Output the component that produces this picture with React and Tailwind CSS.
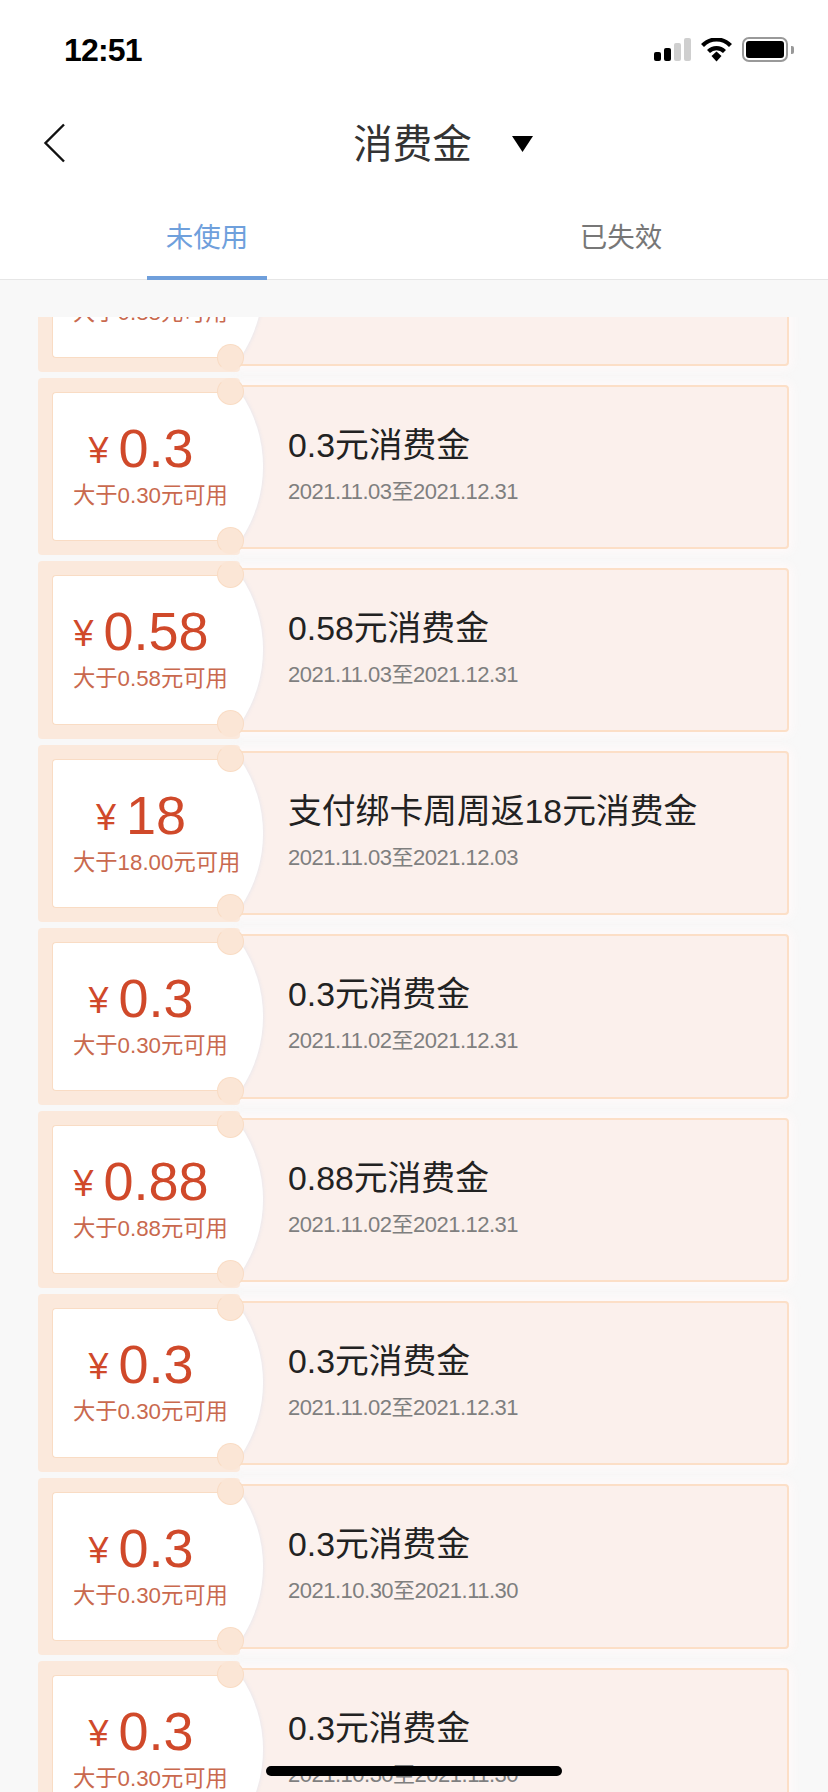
const SANS = "font-['Liberation_Sans','Noto_Sans_CJK_SC',sans-serif]";

const coupons = [
	{ amount: '0.88', min: '0.88', title: '0.88元消费金', date: '2021.11.03至2021.12.31' },
	{ amount: '0.3', min: '0.30', title: '0.3元消费金', date: '2021.11.03至2021.12.31' },
	{ amount: '0.58', min: '0.58', title: '0.58元消费金', date: '2021.11.03至2021.12.31' },
	{ amount: '18', min: '18.00', title: '支付绑卡周周返18元消费金', date: '2021.11.03至2021.12.03' },
	{ amount: '0.3', min: '0.30', title: '0.3元消费金', date: '2021.11.02至2021.12.31' },
	{ amount: '0.88', min: '0.88', title: '0.88元消费金', date: '2021.11.02至2021.12.31' },
	{ amount: '0.3', min: '0.30', title: '0.3元消费金', date: '2021.11.02至2021.12.31' },
	{ amount: '0.3', min: '0.30', title: '0.3元消费金', date: '2021.10.30至2021.11.30' },
	{ amount: '0.3', min: '0.30', title: '0.3元消费金', date: '2021.10.30至2021.11.30' },
]

function StatusBar() {
	return (
		<div className="h-[88px] flex items-start justify-between pt-[32px] pl-[64px] pr-[34px]">
			<span className="text-[32px] leading-[36px] font-bold tracking-[-0.8px] text-black">12:51</span>
			<div className="flex items-center gap-[10px] pt-[5px]">
				<svg width="37" height="24" viewBox="0 0 37 24">
					<rect x="0" y="14" width="7" height="9" rx="2" fill="#000" />
					<rect x="10" y="10" width="7" height="13" rx="2" fill="#000" />
					<rect x="20" y="5" width="7" height="18" rx="2" fill="#cfcfcf" />
					<rect x="30" y="0" width="7" height="23" rx="2" fill="#cfcfcf" />
				</svg>
				<svg width="31" height="24" viewBox="0 0 31 24">
					<path d="M1.5 7.5 C9.5 -0.5 21.5 -0.5 29.5 7.5" stroke="#000" strokeWidth="4.2" fill="none" />
					<path d="M7.5 13.5 C12 9 19 9 23.5 13.5" stroke="#000" strokeWidth="4.2" fill="none" />
					<path d="M10.5 18 L15.5 13.5 L20.5 18 L15.5 23.5 Z" fill="#000" />
				</svg>
				<div className="flex items-center gap-[3px]">
					<div className="w-[46px] h-[25px] rounded-[7px] border-2 border-[#999] p-[2px]">
						<div className="w-full h-full rounded-[3px] bg-black" />
					</div>
					<div className="w-[3px] h-[8px] rounded-r-[2px] bg-[#999]" />
				</div>
			</div>
		</div>
	)
}

function NavBar() {
	return (
		<div className="relative h-[92px] flex items-start justify-center">
			<svg className="absolute left-[43px] top-[35px]" width="23" height="40" viewBox="0 0 23 40">
				<path d="M21 1.5 L2.5 20 L21 38.5" stroke="#111" strokeWidth="2.4" fill="none" />
			</svg>
			<div className="flex items-center pl-[58px] mt-[33px]">
				<span className="text-[39.5px] leading-[46px] text-[#333]">消费金</span>
				<svg className="ml-[40px]" width="21" height="16" viewBox="0 0 21 16">
					<path d="M0 0 H21 L10.5 16 Z" fill="#000" />
				</svg>
			</div>
		</div>
	)
}

function Tabs() {
	return (
		<div className="relative flex h-[100px] border-b border-[#e6e6e6]">
			<div className="flex-1 flex justify-center">
				<div className="w-[120px] h-[100px] border-b-[4px] border-[#6f9fdb] text-center pt-[40px] text-[27.5px] leading-[36px] text-[#6fa0dc] -mb-[1px]">未使用</div>
			</div>
			<div className="flex-1 flex justify-center pt-[40px] text-[27.5px] leading-[36px] text-[#777]">已失效</div>
		</div>
	)
}

function Coupon({ amount, min, title, date }) {
	return (
		<div className="relative flex h-[177.3px] shrink-0">
			{/* left stub */}
			<div className="relative w-[202px] shrink-0 bg-[#fbe9dc] rounded-[4px] pl-[14px] py-[14px] z-30">
				<div className="h-full rounded-l-[4px] bg-white border-l border-y border-[#f9dcc4] pt-[35px]">
					<div className="w-[176px] h-[40px] flex items-center justify-center">
						<span className="text-[36px] leading-[40px] text-[#d0492a] mt-[6px] mr-[10px]">¥</span>
						<span className="text-[54px] leading-[40px] text-[#d0492a]">{amount}</span>
					</div>
					<div className="pl-[20px] mt-[15px] text-[22.3px] leading-[26px] text-[#c9694e] whitespace-nowrap">大于{min}元可用</div>
				</div>
			</div>
			{/* right panel */}
			<div className="flex-1 my-[6.5px] -ml-[4px] pl-[50px] pt-[36px] rounded-[4px] border-2 border-[#fcdfc7] bg-[#fbf0ec] shadow-[0_0_8px_4px_rgba(255,250,250,0.9)]">
				<div className="text-[33.8px] leading-[44px] text-[#222] whitespace-nowrap">{title}</div>
				<div className="mt-[12px] text-[22px] leading-[26px] tracking-[-0.5px] text-[#7f7f7f] whitespace-nowrap">{date}</div>
			</div>
			{/* scallop over the seam */}
			<svg className="absolute left-[190px] top-[12px] z-20 drop-shadow-[0_0_2px_rgba(190,210,240,0.4)]" width="40" height="153" viewBox="0 0 40 153">
				<path d="M0 2 H12 A132 132 0 0 1 12 151 H0 Z" fill="#fff" />
			</svg>
			<div className="absolute left-[179px] top-0 z-40 w-[27px] h-[27px] rounded-full bg-[#fbe6d6] border border-[#f9dcc4] border-t-transparent" />
			<div className="absolute left-[179px] top-[149px] z-40 w-[27px] h-[27px] rounded-full bg-[#fbe6d6] border border-[#f9dcc4] border-b-transparent" />
		</div>
	)
}

export default function App() {
	return (
		<div className={`${SANS} relative w-[828px] h-[1792px] overflow-hidden bg-[#f8f8f8] flex flex-col`}>
			<div className="bg-white shrink-0">
				<StatusBar />
				<NavBar />
				<Tabs />
			</div>
			<div className="mt-[37px] flex-1 overflow-hidden pl-[38px] pr-[39px]">
				<div className="-mt-[122.3px] flex flex-col gap-[6px]">
					{coupons.map((c, i) => (
						<Coupon key={i} {...c} />
					))}
				</div>
			</div>
			<div className="absolute left-[266px] top-[1766px] w-[296px] h-[10px] rounded-full bg-black z-50" />
		</div>
	)
}
